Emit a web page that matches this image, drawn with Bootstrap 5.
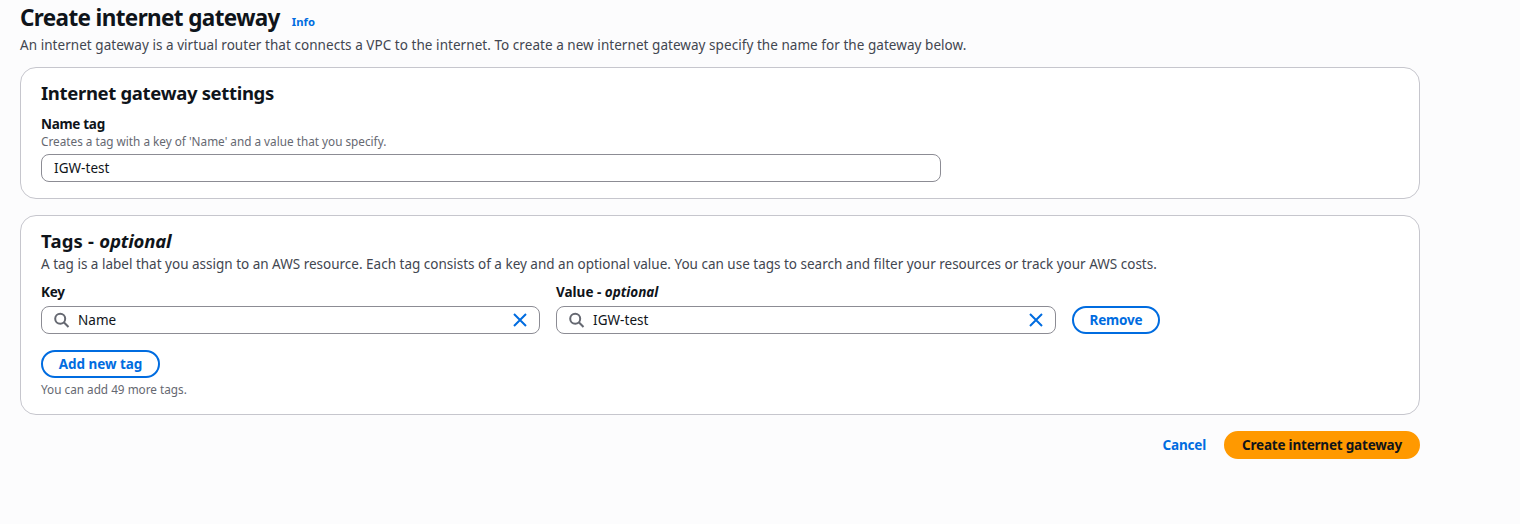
<!DOCTYPE html>
<html lang="en">
<head>
<meta charset="utf-8">
<meta name="viewport" content="width=device-width, initial-scale=1">
<title>Create internet gateway</title>
<link href="https://cdn.jsdelivr.net/npm/bootstrap@5.3.0/dist/css/bootstrap.min.css" rel="stylesheet">
<style>
body{background:#fcfcfd;color:#0f141a;font-family:"Noto Sans","Open Sans",sans-serif;font-size:13.5px;line-height:20px}
.page{width:1440px;padding:4px 20px 0}
h1{font-size:22.5px;line-height:28px;font-weight:700;letter-spacing:-.63px}
h2{font-size:18.5px;line-height:24px;font-weight:700;letter-spacing:-.33px}
h2 .lead-word{letter-spacing:.2px}
h2 em{letter-spacing:-.15px}
.info-link{font-size:11.25px;line-height:16px;font-weight:700;margin-left:12px;color:#006ce0}
.desc{color:#424650}
.intro{letter-spacing:.05px;margin:3px 0 12px}
.hint{color:#656871;font-size:11.75px;line-height:14px;padding-bottom:2px}
.panel{border:1px solid #c6c6cd;border-radius:16px;background:#fff;padding:13px 20px 16px}
.panel h2{margin-bottom:9px}
.panel h2.with-desc{margin-bottom:1px}
.field-label{display:block;font-weight:700;line-height:20px;letter-spacing:-.3px}
.value-label{letter-spacing:0}
.field.form-control{height:28px;min-height:0;border:1px solid #8c8c94;border-radius:8px;background:#fff;padding:0 12px;color:#0f141a;font-size:13.5px;line-height:26px;letter-spacing:.05px}
.name-field{width:900px}
.tag-row{display:grid;grid-template-columns:499px 500px 88px;column-gap:16px}
.pill{height:28px;border:2px solid #006ce0;border-radius:20px;font-size:13.5px;line-height:20px;font-weight:700;letter-spacing:-.2px;color:#006ce0;padding:2px 0;background:#fff}
.pill-add{width:119px;letter-spacing:-.05px}
.pill-primary{width:196px;background:#f90;border-color:#f90;color:#0f141a}
.cancel{font-weight:700;letter-spacing:-.2px;color:#006ce0;margin-right:18px}
svg{display:block;flex:none;fill:none;stroke-width:2}
.ico-search{stroke:#656871}
.ico-x{stroke:#006ce0}
</style>
</head>
<body>
<main class="page">
  <header>
    <div class="d-flex align-items-baseline">
      <h1 class="mb-0">Create internet gateway</h1>
      <a class="info-link text-decoration-none" href="#">Info</a>
    </div>
    <p class="desc intro">An internet gateway is a virtual router that connects a VPC to the internet. To create a new internet gateway specify the name for the gateway below.</p>
  </header>

  <section class="panel mb-3">
    <h2>Internet gateway settings</h2>
    <label class="field-label" for="nameTag">Name tag</label>
    <div class="hint mb-1">Creates a tag with a key of 'Name' and a value that you specify.</div>
    <input id="nameTag" class="form-control field name-field" type="text" value="IGW-test">
  </section>

  <section class="panel mb-3">
    <h2 class="with-desc"><span class="lead-word">Tags - </span><em>optional</em></h2>
    <p class="desc mb-2">A tag is a label that you assign to an AWS resource. Each tag consists of a key and an optional value. You can use tags to search and filter your resources or track your AWS costs.</p>
    <div class="tag-row align-items-end mb-3">
      <div>
        <span class="field-label mb-1">Key</span>
        <div class="form-control field d-flex align-items-center">
          <svg class="ico-search" width="16" height="16" viewBox="0 0 16 16"><circle cx="6.2" cy="6.7" r="5"/><path d="m9.8 10.3 4.7 4.7"/></svg>
          <span class="ms-2">Name</span>
          <svg class="ico-x ms-auto" width="16" height="16" viewBox="0 0 16 16"><path d="m3 2 12 12M15 2 3 14"/></svg>
        </div>
      </div>
      <div>
        <span class="field-label value-label mb-1">Value - <em>optional</em></span>
        <div class="form-control field d-flex align-items-center">
          <svg class="ico-search" width="16" height="16" viewBox="0 0 16 16"><circle cx="6.2" cy="6.7" r="5"/><path d="m9.8 10.3 4.7 4.7"/></svg>
          <span class="ms-2">IGW-test</span>
          <svg class="ico-x ms-auto" width="16" height="16" viewBox="0 0 16 16"><path d="m3 2 12 12M15 2 3 14"/></svg>
        </div>
      </div>
      <button class="btn pill" type="button">Remove</button>
    </div>
    <button class="btn pill pill-add d-block mb-1" type="button">Add new tag</button>
    <div class="hint">You can add 49 more tags.</div>
  </section>

  <div class="d-flex justify-content-end align-items-center">
    <a class="cancel text-decoration-none" href="#">Cancel</a>
    <button class="btn pill pill-primary" type="button">Create internet gateway</button>
  </div>
</main>
<script src="https://cdn.jsdelivr.net/npm/bootstrap@5.3.0/dist/js/bootstrap.bundle.min.js"></script>
</body>
</html>
